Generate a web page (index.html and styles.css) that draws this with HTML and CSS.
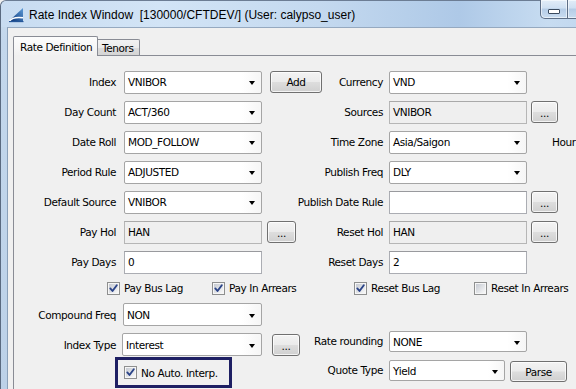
FILE: index.html
```html
<!DOCTYPE html>
<html>
<head>
<meta charset="utf-8">
<title>Rate Index Window</title>
<link rel="stylesheet" href="styles.css">
</head>
<body>
<svg class="defs" width="0" height="0" aria-hidden="true">
  <defs>
    <linearGradient id="cbg" x1="0" y1="0" x2="1" y2="1">
      <stop offset="0" stop-color="#c6cad2"/>
      <stop offset="1" stop-color="#f8f8f8"/>
    </linearGradient>
    <linearGradient id="ig" x1="0" y1="1" x2="1" y2="0">
      <stop offset="0" stop-color="#0b3477"/>
      <stop offset="1" stop-color="#5c9ad6"/>
    </linearGradient>
    <symbol id="cb" viewBox="0 0 13 13">
      <rect x=".5" y=".5" width="12" height="12" fill="#f6f6f6" stroke="#8e8f8f"/>
      <rect x="2" y="2" width="9" height="9" fill="url(#cbg)"/>
    </symbol>
    <symbol id="tick" viewBox="0 0 13 13">
      <path d="M3.3 6.4 L5.5 9 L9.8 3.3" fill="none" stroke="#2b4488" stroke-width="1.9" stroke-linejoin="round" stroke-linecap="round"/>
    </symbol>
  </defs>
</svg>

<div class="window">
  <div class="titlebar">
    <svg class="app-icon" width="17" height="17" viewBox="0 0 17 17">
      <polygon points="1,15 15,2 15,15" fill="url(#ig)"/>
      <path d="M1.5 15 Q5 10.5 15 11.8" fill="none" stroke="#ffffff" stroke-width="1.6"/>
      <path d="M1 15.6 H15.5" stroke="#1d4f94" stroke-width="1.1"/>
    </svg>
    <span class="title">Rate Index Window  [130000/CFTDEV/] (User: calypso_user)</span>
    <div class="caption-btns">
      <div class="cap cap-min"><span class="min-glyph"></span></div>
      <div class="cap cap-max"></div>
      <div class="cap cap-close"></div>
    </div>
  </div>

  <div class="client">
    <div class="tabs">
      <div class="tab tab-active">Rate Definition</div>
      <div class="tab">Tenors</div>
    </div>
    <div class="pane">
      <div class="form">
        <!-- row 1 -->
        <div class="lbl">Index</div>
        <div class="combo c2"><span class="val">VNIBOR</span><span class="arrow"></span></div>
        <div class="btn btn-add c3">Add</div>
        <div class="lbl lbl2 c4">Currency</div>
        <div class="combo c5"><span class="val">VND</span><span class="arrow"></span></div>

        <!-- row 2 -->
        <div class="lbl">Day Count</div>
        <div class="combo c2"><span class="val">ACT/360</span><span class="arrow"></span></div>
        <div class="lbl lbl2 c4">Sources</div>
        <div class="field ro c5">VNIBOR</div>
        <div class="btn btn-dots c6">...</div>

        <!-- row 3 -->
        <div class="lbl">Date Roll</div>
        <div class="combo c2"><span class="val">MOD_FOLLOW</span><span class="arrow"></span></div>
        <div class="lbl lbl2 c4">Time Zone</div>
        <div class="combo c5"><span class="val">Asia/Saigon</span><span class="arrow"></span></div>
        <div class="hour c6">Hour</div>

        <!-- row 4 -->
        <div class="lbl">Period Rule</div>
        <div class="combo c2"><span class="val">ADJUSTED</span><span class="arrow"></span></div>
        <div class="lbl lbl2 c4">Publish Freq</div>
        <div class="combo c5"><span class="val">DLY</span><span class="arrow"></span></div>

        <!-- row 5 -->
        <div class="lbl">Default Source</div>
        <div class="combo c2"><span class="val">VNIBOR</span><span class="arrow"></span></div>
        <div class="lbl lbl2 c4">Publish Date Rule</div>
        <div class="field c5"></div>
        <div class="btn btn-dots c6">...</div>

        <!-- row 6 -->
        <div class="lbl">Pay Hol</div>
        <div class="field ro c2">HAN</div>
        <div class="btn btn-dots btn-dots-l c3">...</div>
        <div class="lbl lbl2 c4">Reset Hol</div>
        <div class="field ro c5">HAN</div>
        <div class="btn btn-dots c6">...</div>

        <!-- row 7 -->
        <div class="lbl">Pay Days</div>
        <div class="field c2">0</div>
        <div class="lbl lbl2 c4">Reset Days</div>
        <div class="field c5">2</div>

        <!-- row 8: checkboxes -->
        <div class="checks">
          <div class="chk chk-1"><svg class="box" width="13" height="13"><use href="#cb"/><use href="#tick"/></svg><span>Pay Bus Lag</span></div>
          <div class="chk chk-2"><svg class="box" width="13" height="13"><use href="#cb"/><use href="#tick"/></svg><span>Pay In Arrears</span></div>
          <div class="chk chk-3"><svg class="box" width="13" height="13"><use href="#cb"/><use href="#tick"/></svg><span>Reset Bus Lag</span></div>
          <div class="chk"><svg class="box" width="13" height="13"><use href="#cb"/></svg><span>Reset In Arrears</span></div>
        </div>

        <!-- row 9 -->
        <div class="lbl">Compound Freq</div>
        <div class="combo c2 shift1"><span class="val">NON</span><span class="arrow"></span></div>

        <!-- row 10 -->
        <div class="lbl">Index Type</div>
        <div class="combo c2 shift2"><span class="val">Interest</span><span class="arrow"></span></div>
        <div class="btn btn-dots btn-dots-it c3">...</div>
        <div class="lbl lbl2 c4 top-cell">Rate rounding</div>
        <div class="combo combo-sm c5 top-cell"><span class="val">NONE</span><span class="arrow"></span></div>

        <!-- row 11 -->
        <div class="noauto c2">
          <svg class="box" width="13" height="13"><use href="#cb"/><use href="#tick"/></svg><span>No Auto. Interp.</span>
        </div>
        <div class="lbl lbl2 c4 top-cell">Quote Type</div>
        <div class="quote">
          <div class="combo combo-sm combo-quote"><span class="val">Yield</span><span class="arrow"></span></div>
          <div class="btn btn-parse">Parse</div>
        </div>
      </div>
    </div>
  </div>
</div>
</body>
</html>
```

FILE: styles.css
```css
* { box-sizing: border-box; }

html, body {
  margin: 0;
  padding: 0;
  overflow: hidden;
}

body {
  width: 576px;
  height: 389px;
  background: #f0f0f0;
  font-family: "DejaVu Sans", sans-serif;
  font-size: 10.5px;
  letter-spacing: -0.4px;
  color: #000;
}

.defs { position: absolute; width: 0; height: 0; }

.window {
  width: 644px;
  height: 389px;
  display: flex;
  flex-direction: column;
  border-left: 1px solid #5a6a80;
  border-top: 1px solid #6c7d94;
  border-top-left-radius: 6px;
  background: linear-gradient(180deg, #c9dcef 0px, #c3d7ec 40px, #bcd1e8 100%);
  padding-right: 7px;
}

.titlebar {
  height: 27px;
  display: flex;
  align-items: center;
  padding-left: 7px;
  background: linear-gradient(90deg, #c8dcf1 0%, #d2e4f6 25%, #c4d9ef 50%, #aec9e7 72%, #c7dcf1 86%, #b9d1ec 100%);
  border-top-left-radius: 6px;
}

.app-icon { flex: none; margin-right: 4px; margin-top: 1px; }

.title {
  font-family: "Liberation Sans", Arial, sans-serif;
  font-size: 12px;
  letter-spacing: 0;
  white-space: pre;
  color: #000;
  margin-top: 1px;
}

.caption-btns {
  margin-left: auto;
  align-self: flex-start;
  display: flex;
  height: 19px;
  margin-top: -1px;
}

.cap {
  height: 19px;
  border: 1px solid #5d6e86;
  border-top: none;
  background: linear-gradient(180deg, #e2edf8 0%, #cfe0f2 45%, #b5cce6 50%, #c9dcf0 100%);
  box-shadow: inset 0 0 0 1px rgba(255, 255, 255, 0.55);
}

.cap-min {
  width: 28px;
  border-bottom-left-radius: 5px;
  display: flex;
  justify-content: center;
  align-items: flex-end;
  padding-bottom: 4px;
}
.cap-max { width: 26px; border-left: none; }
.cap-close {
  width: 43px;
  border-left: none;
  border-bottom-right-radius: 5px;
  background: linear-gradient(180deg, #e8b4a6 0%, #d27a62 45%, #c24f34 50%, #d98a6c 100%);
}

.min-glyph {
  width: 12px;
  height: 5px;
  background: #fff;
  border: 1px solid #3a4a5e;
  border-radius: 1px;
}

.client {
  flex: 1;
  margin-left: 6px;
  border-left: 1px solid #8aa0b9;
  border-top: 1px solid #95a9c0;
  background: #f0f0f0;
  padding: 8px 0 0 5px;
  display: flex;
  flex-direction: column;
}

.tabs {
  display: flex;
  align-items: flex-end;
  height: 19px;
  position: relative;
  z-index: 1;
}

.tab {
  height: 16px;
  padding: 0 5px 0 4px;
  border: 1px solid #898c95;
  border-bottom: none;
  border-left: none;
  background: linear-gradient(180deg, #f2f2f2 0%, #ebebeb 50%, #dddddd 51%, #d5d5d5 100%);
  display: flex;
  align-items: center;
  border-top-right-radius: 2px;
}

.tab-active {
  width: 85px;
  height: 20px;
  margin-bottom: -1px;
  padding: 0 0 0 6px;
  border-left: 1px solid #898c95;
  background: linear-gradient(180deg, #fcfcfc 0%, #f6f6f6 60%, #f0f0f0 100%);
  border-top-left-radius: 2px;
}

.pane {
  flex: 1;
  border-top: 1px solid #898c95;
  border-left: 1px solid #898c95;
  background: #f0f0f0;
  padding-top: 11px;
}

.form {
  display: grid;
  grid-template-columns: 110px 138px 60px 67px 138px 1fr;
  grid-template-rows: repeat(7, 30px) 22px 31px 29px 30px;
  align-items: center;
}

.lbl {
  grid-column: 1;
  direction: rtl;
  text-align: right;
  padding-right: 8px;
  white-space: nowrap;
}
.lbl2 { padding-right: 6px; }

.combo {
  height: 23px;
  border: 1px solid #a5a5a5;
  border-radius: 2px;
  background: linear-gradient(90deg, #ffffff 0%, #ffffff 86%, #f6f6f6 100%);
  display: flex;
  align-items: center;
  padding-left: 3px;
}
.combo .val { flex: 1; white-space: nowrap; }
.combo .arrow {
  width: 0;
  height: 0;
  border-left: 3.5px solid transparent;
  border-right: 3.5px solid transparent;
  border-top: 4px solid #000;
  margin-right: 6px;
  margin-top: 2px;
}
.combo-sm { height: 21px; }

.shift1 { margin-left: -1px; }
.shift2 { margin-left: -2px; }

.field {
  height: 23px;
  border: 1px solid #abadb3;
  border-top-color: #999a9e;
  background: #fff;
  padding-left: 3px;
  line-height: 21px;
  white-space: nowrap;
}
.field.ro {
  background: #efefef;
  border-color: #b6b6b6;
  border-top-color: #a9a9a9;
}

.btn {
  height: 22px;
  border: 1px solid #707070;
  border-radius: 3px;
  background: linear-gradient(180deg, #f3f3f3 0%, #ebebeb 48%, #dddddd 52%, #d0d0d0 100%);
  box-shadow: inset 0 0 0 1px rgba(255, 255, 255, 0.75);
  display: flex;
  align-items: center;
  justify-content: center;
  justify-self: start;
}
.btn-add { width: 52px; justify-self: end; height: 22px; }
.btn-dots { width: 27px; margin-left: 4px; padding-top: 2px; }
.btn-dots-l { margin-left: 5px; width: 29px; }
.btn-dots-it { margin-left: 10px; width: 28px; }

.hour { padding-left: 25px; white-space: nowrap; }

.checks {
  grid-column: 1 / -1;
  display: flex;
  align-items: center;
  padding-left: 93px;
  height: 22px;
}
.chk { display: flex; align-items: center; gap: 4px; white-space: nowrap; }
.chk-1 { width: 105px; }
.chk-2 { width: 142px; }
.chk-3 { width: 120px; }
.box { flex: none; display: block; }

.top-cell { align-self: start; margin-top: 1px; }
.lbl.top-cell { height: 21px; line-height: 21px; }

.noauto {
  align-self: start;
  margin-left: -9px;
  margin-top: -2px;
  width: 117px;
  height: 31px;
  border: 3px solid #1e1f63;
  display: flex;
  align-items: center;
  gap: 4px;
  padding-left: 6px;
  white-space: nowrap;
}

.quote {
  grid-column: 5 / -1;
  align-self: start;
  margin-top: 1px;
  display: flex;
  align-items: flex-start;
  gap: 5px;
}
.combo-quote { width: 116px; }
.btn-parse { width: 57px; height: 21px; margin-top: 1px; }

/* column placement (kept last so it wins over .lbl) */
.c2 { grid-column: 2; }
.c3 { grid-column: 3; }
.c4 { grid-column: 4; }
.c5 { grid-column: 5; }
.c6 { grid-column: 6; }
```
